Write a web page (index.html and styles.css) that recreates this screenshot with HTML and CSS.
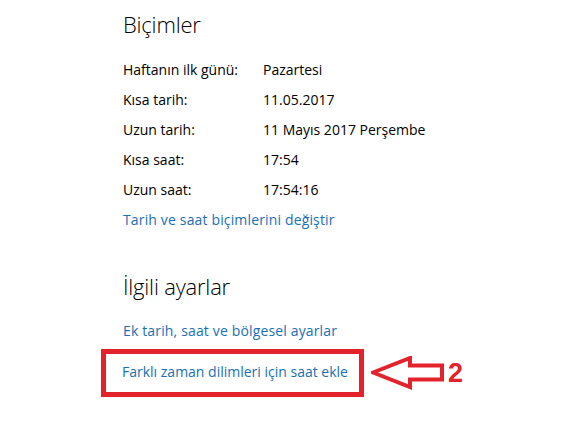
FILE: index.html
```html
<!DOCTYPE html>
<html lang="tr">
<head>
<meta charset="utf-8">
<link rel="stylesheet" href="styles.css">
</head>
<body>
<main class="page">
  <h2 class="heading first">Biçimler</h2>
  <div class="fields">
    <span class="label">Haftanın ilk günü:</span><span class="value">Pazartesi</span>
    <span class="label">Kısa tarih:</span><span class="value">11.05.2017</span>
    <span class="label">Uzun tarih:</span><span class="value">11 Mayıs 2017 Perşembe</span>
    <span class="label">Kısa saat:</span><span class="value">17:54</span>
    <span class="label">Uzun saat:</span><span class="value">17:54:16</span>
  </div>
  <a class="link" href="#">Tarih ve saat biçimlerini değiştir</a>

  <h2 class="heading second">İlgili ayarlar</h2>
  <a class="link" href="#">Ek tarih, saat ve bölgesel ayarlar</a>
  <div class="callout">
    <div class="highlight"><a class="link" href="#">Farklı zaman dilimleri için saat ekle</a></div>
    <svg class="arrow" width="74" height="34" viewBox="0 0 74 34">
      <polygon points="2,16.5 39,2 39,9.5 71,9.5 71,23.5 39,23.5 39,31" fill="#fff" stroke="#e3232b" stroke-width="4" stroke-linejoin="miter"/>
    </svg>
    <span class="num">2</span>
  </div>
</main>
</body>
</html>
```
FILE: styles.css
```css
html, body {
  margin: 0;
  padding: 0;
  background: #fff;
}
.page {
  padding-left: 123px;
  padding-top: 9px;
  font-family: "Open Sans", "Noto Sans", sans-serif;
  color: #000;
}
.heading {
  margin: 0;
  font-size: 22px;
  font-weight: 300;
  line-height: 30px;
  letter-spacing: -0.2px;
}
.heading.first {
  margin-bottom: 16px;
}
.heading.second {
  margin-top: 36px;
  margin-bottom: 15px;
}
.fields {
  display: grid;
  grid-template-columns: 140px auto;
  font-size: 14px;
  line-height: 30px;
}
.link {
  display: block;
  color: #1a6fb5;
  text-decoration: none;
  font-size: 14px;
  line-height: 30px;
  letter-spacing: 0.15px;
}
.callout {
  display: flex;
  align-items: center;
  margin-left: -22px;
  margin-top: 3px;
}
.highlight {
  border: 5px solid #e3232b;
  padding: 3px 11px 5px 16px;
}
.highlight .link {
  letter-spacing: 0;
}
.arrow {
  margin-left: 7px;
  display: block;
}
.num {
  margin-left: 3px;
  color: #e3232b;
  font-family: "Liberation Sans", Arial, sans-serif;
  font-weight: 700;
  font-size: 27px;
  line-height: 30px;
}
```
